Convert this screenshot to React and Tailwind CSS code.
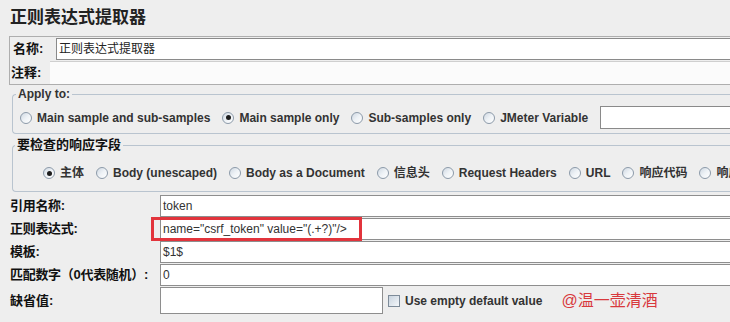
const FONT = "font-['Liberation_Sans','Noto_Sans_CJK_SC',sans-serif]";

function Radio({ on }) {
  return (
    <span className="flex h-[12px] w-[12px] shrink-0 items-center justify-center rounded-full border border-[#8c9aa9] bg-linear-to-br from-[#cfd8e2] via-[#eef2f6] to-white">
      {on && <span className="h-[5px] w-[5px] rounded-full bg-[#1c1c1c]" />}
    </span>
  );
}

function Option({ on, children }) {
  return (
    <label className="flex items-center gap-[5px] whitespace-nowrap text-[12px] font-bold text-[#333]">
      <Radio on={on} />
      {children}
    </label>
  );
}

function FieldRow({ label, value, h = 'h-[22px]', children }) {
  return (
    <div className={`relative flex ${h} items-stretch`}>
      <div className="flex w-[160px] shrink-0 items-center whitespace-nowrap pl-[10px] text-[13px] font-bold tracking-[-0.3px] text-[#111]">{label}</div>
      <div className="flex flex-1 items-center border-y border-l border-[#8e8e8e] bg-white pl-[2px] text-[12px] text-[#333]">
        {value}
      </div>
      {children}
    </div>
  );
}

export default function App() {
  return (
    <div className={`h-[322px] w-[730px] overflow-hidden bg-[#eeeeee] ${FONT}`}>
      {/* Title */}
      <div className="h-[36px] pl-[10px] pt-[8px] text-[17px] font-bold leading-[20px] text-[#222]">正则表达式提取器</div>

      {/* Name / comment */}
      <div className="ml-[9px] border-y border-l border-[#aeaeae] pt-[1px]">
        <div className="flex h-[22px]">
          <div className="flex w-[46px] items-center pl-[3px] text-[13px] font-bold text-[#111]">名称:</div>
          <div className="flex flex-1 items-center border-y border-l border-[#8a8a8a] bg-white pl-[2px] text-[12px] text-[#222]">
            正则表达式提取器
          </div>
        </div>
        <div className="mt-[1px] flex h-[23px]">
          <div className="flex w-[40px] items-center pl-[1px] text-[13px] font-bold text-[#111]">注释:</div>
          <div className="flex-1 border-t border-[#cfcfcf] bg-[#fbfbfb]" />
        </div>
      </div>

      {/* Apply to */}
      <fieldset className="ml-[12px] mt-[2px] rounded-l-[4px] border border-r-0 border-[#b9c4cf]">
        <legend className="ml-[3px] px-[2px] text-[12px] font-bold leading-[14px] text-[#333]">Apply to:</legend>
        <div className="mb-[4px] mt-[5px] flex h-[23px] items-center gap-[12px] pl-[7px]">
          <Option>Main sample and sub-samples</Option>
          <Option on>Main sample only</Option>
          <Option>Sub-samples only</Option>
          <Option>JMeter Variable</Option>
          <div className="h-[23px] flex-1 border-y border-l border-[#8a8a8a] bg-white" />
        </div>
      </fieldset>

      {/* Field to check */}
      <fieldset className="ml-[12px] mt-[3px] rounded-l-[4px] border border-r-0 border-[#b9c4cf]">
        <legend className="ml-[2px] px-[2px] text-[13px] font-bold leading-[16px] text-[#111]">要检查的响应字段</legend>
        <div className="mb-[8px] mt-[10px] flex h-[20px] items-center gap-[12px] pl-[30px]">
          <Option on>主体</Option>
          <Option>Body (unescaped)</Option>
          <Option>Body as a Document</Option>
          <Option>信息头</Option>
          <Option>Request Headers</Option>
          <Option>URL</Option>
          <Option>响应代码</Option>
          <Option>响应信息</Option>
        </div>
      </fieldset>

      {/* Fields */}
      <div className="mt-[3px] flex flex-col gap-[1px]">
        <FieldRow label="引用名称:" value="token" />
        <FieldRow label="正则表达式:" value={'name="csrf_token" value="(.+?)"/>'}>
          <div className="absolute left-[151px] top-[-1px] h-[24px] w-[211px] border-[3px] border-[#e2343c]" />
        </FieldRow>
        <FieldRow label="模板:" value="$1$" />
        <FieldRow label="匹配数字（0代表随机）:" value="0" />
        <div className="flex h-[27px] items-center">
          <div className="flex h-full w-[160px] shrink-0 items-center pl-[10px] text-[13px] font-bold text-[#111]">缺省值:</div>
          <div className="h-full w-[223px] border border-[#8e8e8e] bg-white" />
          <span className="ml-[5px] h-[12px] w-[12px] border border-[#7d8b99] bg-linear-to-br from-[#c9d4df] to-[#f4f7fa]" />
          <span className="ml-[5px] text-[12px] font-bold text-[#333]">Use empty default value</span>
          <span className="ml-[19px] text-[16px] text-[#d8393d]">@温一壶清酒</span>
        </div>
      </div>
    </div>
  );
}
